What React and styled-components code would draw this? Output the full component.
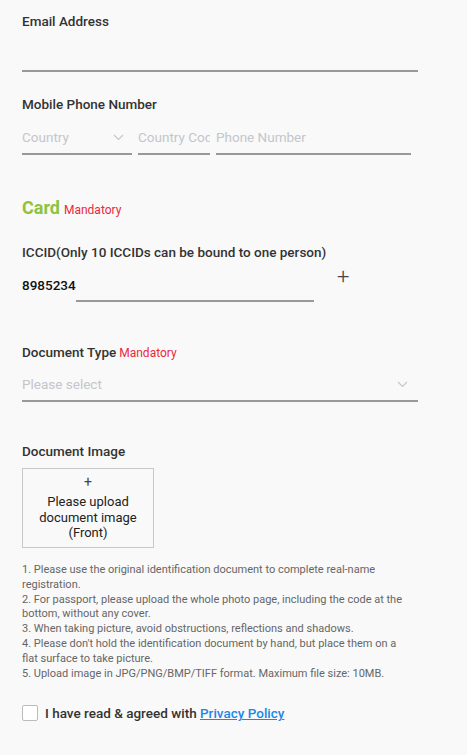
import React from 'react';
import styled, { createGlobalStyle } from 'styled-components';

const GlobalStyle = createGlobalStyle`
  body {
    margin: 0;
    background: #f9f9f9;
    font-family: Roboto, "Noto Sans", "Liberation Sans", sans-serif;
  }
`;

const Page = styled.div`
  width: 396px;
  padding: 13px 22px 30px;
  box-sizing: content-box;
`;

const Field = styled.div`
  margin-bottom: ${p => p.gap ?? 24}px;
`;

const Label = styled.div`
  font-size: 13.5px;
  line-height: 16px;
  font-weight: 500;
  color: #333;
  margin-bottom: ${p => p.mb ?? 9}px;
`;

const Mandatory = styled.span`
  color: #e8293d;
  font-size: 12px;
  font-weight: 400;
  margin-left: ${p => p.ml ?? 3}px;
`;

const Row = styled.div`
  display: flex;
  align-items: flex-start;
  gap: 6px;
`;

const Input = styled.div`
  width: ${p => p.w ? p.w + 'px' : '100%'};
  height: 32px;
  border-bottom: 2px solid #999;
  display: flex;
  align-items: center;
  justify-content: space-between;
  box-sizing: content-box;
  font-size: 13.5px;
  color: #c3c6cb;
  white-space: nowrap;
  overflow: hidden;
`;

const Arrow = styled.span`
  display: flex;
  margin-right: ${p => p.mr ?? 8}px;
`;

const Chevron = () => (
  <svg width="11" height="7" viewBox="0 0 11 7" fill="none">
    <path d="M1 1l4.5 4.5L10 1" stroke="#c3c6cb" strokeWidth="1.1" />
  </svg>
);

const CardTitle = styled.div`
  display: flex;
  align-items: baseline;
  margin: 42px 0 23px;
  line-height: 22px;
`;

const Green = styled.span`
  color: #8cc43f;
  font-size: 18px;
  font-weight: 700;
`;

const IccidRow = styled.div`
  display: flex;
  align-items: flex-start;
`;

const Prefix = styled.div`
  font-size: 13.5px;
  font-weight: 500;
  color: #111;
  width: 54px;
  padding-top: 9px;
`;

const PlusBtn = styled.div`
  font-size: 22px;
  font-weight: 300;
  color: #444;
  margin-left: 23px;
  line-height: 20px;
  margin-top: -1px;
`;

const Upload = styled.div`
  width: 130px;
  height: 78px;
  border: 1px solid #c8c8c8;
  display: flex;
  flex-direction: column;
  align-items: center;
  justify-content: center;
  text-align: center;
  font-size: 13px;
  line-height: 15.5px;
  color: #222;
  margin-top: 9px;
  margin-bottom: 15px;
`;

const UploadPlus = styled.div`
  font-size: 14px;
  color: #444;
  margin-bottom: 5px;
  line-height: 14px;
`;

const Notes = styled.div`
  font-size: 11px;
  line-height: 14.8px;
  color: #666;
  width: 380px;
`;

const Agree = styled.label`
  display: flex;
  align-items: center;
  gap: 7px;
  margin-top: 24px;
  font-size: 13.5px;
  font-weight: 500;
  color: #333;
`;

const Box = styled.span`
  width: 14px;
  height: 14px;
  border: 1px solid #bbb;
  border-radius: 2px;
  background: #fff;
`;

const Link = styled.a`
  color: #1e88e5;
  text-decoration: underline;
`;

export default function App() {
  return (
    <>
      <GlobalStyle />
      <Page>
        <Field>
          <Label>Email Address</Label>
          <Input />
        </Field>

        <Field gap={0}>
          <Label>Mobile Phone Number</Label>
          <Row>
            <Input w={110}>
              <span>Country</span>
              <Arrow><Chevron /></Arrow>
            </Input>
            <Input w={72}>Country Code</Input>
            <Input w={195}>Phone Number</Input>
          </Row>
        </Field>

        <CardTitle>
          <Green>Card</Green>
          <Mandatory ml={4}>Mandatory</Mandatory>
        </CardTitle>

        <Field gap={42}>
          <Label mb={8}>ICCID(Only 10 ICCIDs can be bound to one person)</Label>
          <IccidRow>
            <Prefix>8985234</Prefix>
            <Input w={238} />
            <PlusBtn>+</PlusBtn>
          </IccidRow>
        </Field>

        <Field gap={41}>
          <Label mb={7}>
            Document Type<Mandatory>Mandatory</Mandatory>
          </Label>
          <Input>
            <span>Please select</span>
            <Arrow mr={10}><Chevron /></Arrow>
          </Input>
        </Field>

        <Label mb={0}>Document Image</Label>
        <Upload>
          <UploadPlus>+</UploadPlus>
          Please upload<br />document image<br />(Front)
        </Upload>

        <Notes>
          1. Please use the original identification document to complete real-name registration.<br />
          2. For passport, please upload the whole photo page, including the code at the bottom, without any cover.<br />
          3. When taking picture, avoid obstructions, reflections and shadows.<br />
          4. Please don't hold the identification document by hand, but place them on a flat surface to take picture.<br />
          5. Upload image in JPG/PNG/BMP/TIFF format. Maximum file size: 10MB.
        </Notes>

        <Agree>
          <Box />
          <span>I have read &amp; agreed with <Link href="#">Privacy Policy</Link></span>
        </Agree>
      </Page>
    </>
  );
}
